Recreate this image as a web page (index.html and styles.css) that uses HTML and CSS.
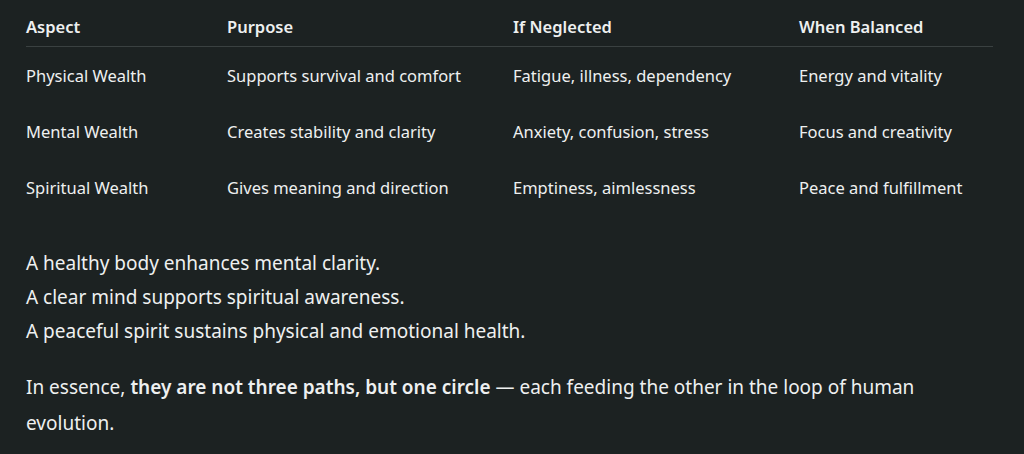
FILE: index.html
```html
<!DOCTYPE html>
<html>
<head>
<meta charset="utf-8">
<link rel="stylesheet" href="styles.css">
</head>
<body>
<main class="page">
  <table class="grid">
    <thead>
      <tr><th class="c1">Aspect</th><th class="c2">Purpose</th><th class="c3">If Neglected</th><th class="c4">When Balanced</th></tr>
    </thead>
    <tbody>
      <tr><td>Physical Wealth</td><td>Supports survival and comfort</td><td>Fatigue, illness, dependency</td><td>Energy and vitality</td></tr>
      <tr><td>Mental Wealth</td><td>Creates stability and clarity</td><td>Anxiety, confusion, stress</td><td>Focus and creativity</td></tr>
      <tr><td>Spiritual Wealth</td><td>Gives meaning and direction</td><td>Emptiness, aimlessness</td><td>Peace and fulfillment</td></tr>
    </tbody>
  </table>
  <p class="lines">A healthy body enhances mental clarity.<br>A clear mind supports spiritual awareness.<br>A peaceful spirit sustains physical and emotional health.</p>
  <p class="essence">In essence, <strong>they are not three paths, but one circle</strong> — each feeding the other in the loop of human evolution.</p>
</main>
</body>
</html>
```
FILE: styles.css
```css
html, body {
  margin: 0;
  padding: 0;
  background: #1c2222;
}
body {
  font-family: "Noto Sans", "Open Sans", sans-serif;
  color: #eef0f0;
}
.page {
  padding: 7px 31px 0 26px;
}
.grid {
  width: 967px;
  border-collapse: collapse;
  table-layout: fixed;
  font-size: 16.5px;
}
.grid th, .grid td {
  text-align: left;
  padding: 0;
  font-weight: 400;
}
.grid th {
  font-weight: 600;
  height: 39px;
  vertical-align: middle;
  border-bottom: 1px solid #3a4141;
}
.grid td {
  height: 56px;
  vertical-align: middle;
}
.c1 { width: 201px; }
.c2 { width: 286px; }
.c3 { width: 286px; }
.c4 { width: 194px; }
.lines {
  margin: 31px 0 0;
  font-size: 19px;
  line-height: 34px;
}
.essence {
  margin: 21px 0 0;
  font-size: 19px;
  line-height: 36px;
  width: 900px;
}
.essence strong { font-weight: 600; }
```
